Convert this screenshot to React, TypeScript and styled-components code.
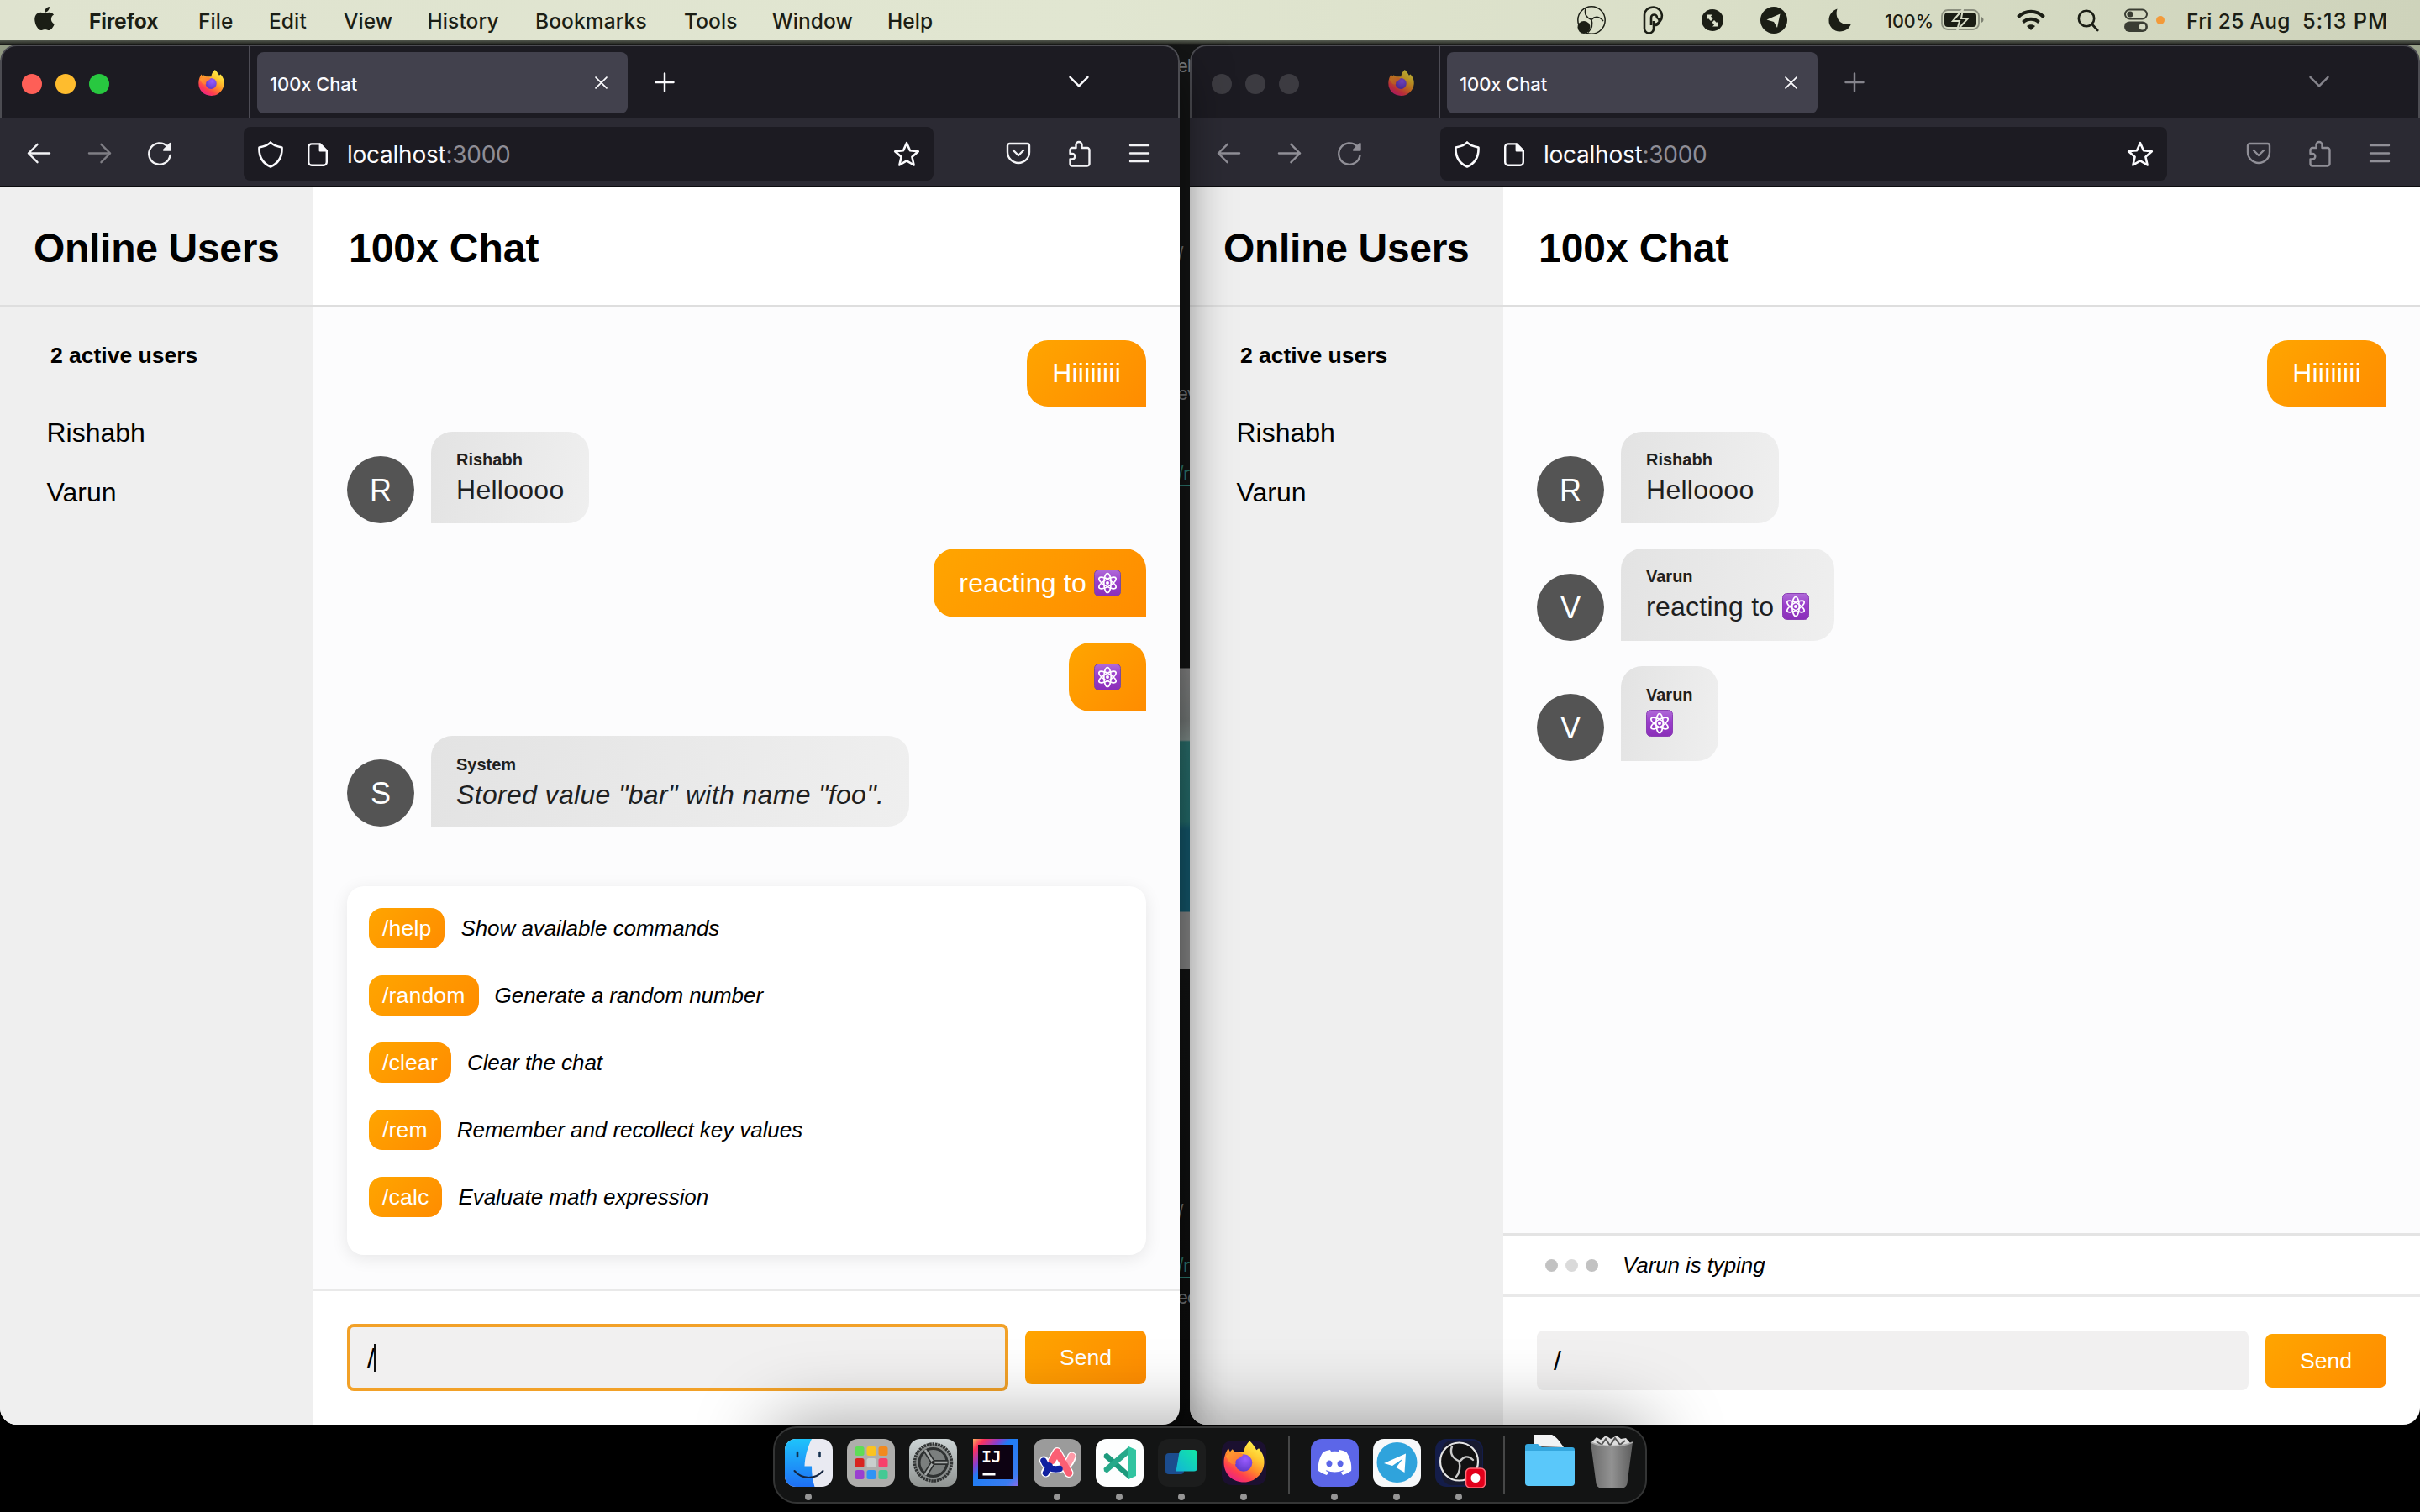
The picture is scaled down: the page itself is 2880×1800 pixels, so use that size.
import React from "react";
import styled, { createGlobalStyle, css } from "styled-components";
import { FaApple, FaDiscord, FaTelegramPlane } from "react-icons/fa";

const Global = createGlobalStyle`
  * { box-sizing: border-box; }
  html, body { margin: 0; padding: 0; background: #000; }
  body { width: 2880px; height: 1800px; overflow: hidden; }
`;

const UI_FONT = `Inter, "Liberation Sans", sans-serif`;
const PAGE_FONT = `"Liberation Sans", Arial, sans-serif`;
const ORANGE = "linear-gradient(135deg, #ffa500 0%, #ff8c00 100%)";

/* ---------- desktop ---------- */

const Desktop = styled.div`
  position: relative;
  width: 2880px;
  height: 1800px;
  display: flex;
  flex-direction: column;
  background: #000;
  overflow: hidden;
`;

const MenuBar = styled.header`
  position: relative;
  z-index: 3;
  flex: 0 0 48px;
  display: flex;
  justify-content: space-between;
  align-items: center;
  padding: 1px 36px 0 40px;
  background: linear-gradient(90deg, #dfe3cf 0%, #e1e6d1 45%, #dadfc8 70%, #ced3bb 100%);
  color: #1b1e15;
  font-family: ${UI_FONT};
`;

const MenuGroup = styled.div`
  display: flex;
  align-items: center;
  height: 46px;
`;

const AppleSlot = styled.div`
  width: 66px;
  height: 32px;
  margin-top: -5px;
`;

const MenuItem = styled.span<{ $w: number; $bold?: boolean }>`
  width: ${(p) => p.$w}px;
  font-size: 24.5px;
  line-height: 46px;
  white-space: nowrap;
  font-weight: ${(p) => (p.$bold ? 700 : 450)};
  letter-spacing: ${(p) => (p.$bold ? "-0.1px" : "0.1px")};
`;

const StatusIcon = styled.div<{ $w: number }>`
  width: ${(p) => p.$w}px;
  height: 46px;
  display: flex;
  align-items: center;
  padding-bottom: 1px;
  svg { display: block; overflow: visible; }
`;

const StatusText = styled.span<{ $w: number; $size: number; $ls?: number }>`
  width: ${(p) => p.$w}px;
  font-size: ${(p) => p.$size}px;
  line-height: 46px;
  font-weight: 450;
  letter-spacing: ${(p) => p.$ls || 0}px;
  white-space: nowrap;
`;

const Stage = styled.main`
  position: relative;
  flex: 0 0 1648px;
  display: flex;
  gap: 12px;
  padding-top: 5px;
  background:
    linear-gradient(#575d52, #33362f 70%, #101010) 0 0 / 100% 5px no-repeat,
    linear-gradient(180deg,
      #141515 0, #141515 747px,
      #8a8a8a 748px, #7b807f 810px, #869390 833px,
      #2c7370 835px, #25706f 930px, #155b70 940px, #155b70 1037px,
      #8c8c8c 1038px, #8c8c8c 1105px,
      #131414 1106px, #0d0d0d 100%) 1380px 0 / 60px 100% no-repeat,
    linear-gradient(#9aa38b, #9aa38b) 0 0 / 100% 40px no-repeat,
    #000;
`;

const Glimpse = styled.span<{ $top: number; $color: string; $line?: boolean }>`
  position: absolute;
  left: 1404px;
  top: ${(p) => p.$top}px;
  width: 12px;
  height: 30px;
  overflow: hidden;
  font: 22px/28px ${UI_FONT};
  letter-spacing: -1px;
  text-indent: -3px;
  color: ${(p) => p.$color};
  border-bottom: ${(p) => (p.$line ? `2px solid ${p.$color}` : "0")};
`;

/* ---------- browser window ---------- */

const Window = styled.section<{ $w: number; $front?: boolean }>`
  position: relative;
  flex: 0 0 ${(p) => p.$w}px;
  display: flex;
  flex-direction: column;
  border-radius: 20px;
  overflow: hidden;
  z-index: ${(p) => (p.$front ? 2 : 1)};
  ${(p) => p.$front && css`box-shadow: 0 30px 60px rgba(0, 0, 0, 0.6);`}
`;

const TabStrip = styled.div`
  flex: 0 0 88px;
  display: flex;
  align-items: center;
  background: #1c1b22;
  border: 2px solid #4c4c52;
  border-bottom: 0;
  border-radius: 20px 20px 0 0;
`;

const Lights = styled.div`
  width: 296px;
  height: 86px;
  display: flex;
  align-items: center;
  gap: 16px;
  padding: 4px 0 0 24px;
  border-right: 2px solid #4d4c55;
`;

const Light = styled.i<{ $c: string }>`
  width: 24px;
  height: 24px;
  border-radius: 50%;
  background: ${(p) => p.$c};
`;

const FoxSlot = styled.div<{ $dim?: boolean }>`
  margin: -2px 0 0 90px;
  height: 32px;
  filter: ${(p) => (p.$dim ? "brightness(0.72)" : "none")};
`;

const Tab = styled.div`
  width: 441px;
  height: 73px;
  margin-left: 8px;
  margin-top: 1px;
  padding: 0 20px 0 15px;
  display: flex;
  align-items: center;
  justify-content: space-between;
  border-radius: 8px;
  background: #42414d;
  color: #fbfbfe;
  font: 500 22px/73px ${UI_FONT};
  letter-spacing: -0.1px;
`;

const TabTitle = styled.span`
  padding-top: 4px;
`;

const StripButton = styled.div<{ $ml: number | "auto"; $mr?: number; $dim?: boolean }>`
  display: flex;
  margin-left: ${(p) => (p.$ml === "auto" ? "auto" : `${p.$ml}px`)};
  margin-right: ${(p) => p.$mr || 0}px;
  color: ${(p) => (p.$dim ? "#85848c" : "#fbfbfe")};
`;

const NavBar = styled.div`
  flex: 0 0 82px;
  display: flex;
  align-items: center;
  padding: 4px 32px 0 31px;
  background: #2b2a33;
  border-bottom: 2px solid #0c0c0f;
`;

const NavButtons = styled.div<{ $gap: number; $dim?: boolean }>`
  display: flex;
  gap: ${(p) => p.$gap}px;
  color: ${(p) => (p.$dim ? "#908f97" : "#f3f3f6")};
`;

const NavIcon = styled.span<{ $off?: boolean }>`
  display: flex;
  opacity: ${(p) => (p.$off ? 0.42 : 1)};
`;

const UrlBar = styled.div<{ $ml: number; $w: number }>`
  width: ${(p) => p.$w}px;
  margin-left: ${(p) => p.$ml}px;
  height: 64px;
  display: flex;
  align-items: center;
  padding: 2px 16px 0;
  border-radius: 8px;
  background: #1c1b22;
  color: #fbfbfe;
  font: 400 28px/62px ${UI_FONT};
`;

const PageSlot = styled.span`
  display: flex;
  margin-left: 25px;
`;

const UrlText = styled.span`
  margin-left: 20px;
  letter-spacing: -0.25px;
  flex: 1;
`;

const Port = styled.span`
  color: #8e8d96;
`;

/* ---------- chat page ---------- */

const Page = styled.div`
  flex: 1;
  min-height: 0;
  display: flex;
  font-family: ${PAGE_FONT};
  color: #000;
  background: #fff;
`;

const Sidebar = styled.aside`
  flex: 0 0 373px;
  background: #efefef;
`;

const Heading = styled.h1<{ $side?: boolean }>`
  margin: 0;
  height: 142px;
  padding: 5px 0 0 ${(p) => (p.$side ? 40 : 42)}px;
  border-bottom: 2px solid #dedede;
  font-size: 48px;
  line-height: 135px;
  font-weight: 700;
  letter-spacing: ${(p) => (p.$side ? -0.3 : -0.05)}px;
  white-space: nowrap;
`;

const ActiveCount = styled.div`
  padding: 40px 0 0 60px;
  font-size: 26.6px;
  font-weight: 700;
  line-height: 36px;
  letter-spacing: -0.05px;
`;

const UserName = styled.div`
  padding-left: 55.5px;
  height: 70.5px;
  font-size: 32px;
  line-height: 70.5px;
`;

const UserList = styled.div`
  padding-top: 39px;
`;

const Main = styled.div`
  flex: 1;
  min-width: 0;
  display: flex;
  flex-direction: column;
`;

const Feed = styled.div`
  flex: 1;
  min-height: 0;
  display: flex;
  flex-direction: column;
  gap: 29.7px;
  padding: 39.5px 40px 0;
  background: #fcfcfd;
`;

const Row = styled.div<{ $own?: boolean }>`
  display: flex;
  align-items: flex-end;
  justify-content: ${(p) => (p.$own ? "flex-end" : "flex-start")};
  gap: 20px;
`;

const Avatar = styled.div`
  width: 80px;
  height: 80px;
  border-radius: 50%;
  background: #545454;
  color: #fff;
  text-align: center;
  font-size: 36px;
  line-height: 82px;
`;

const OwnBubble = styled.div<{ $h: number }>`
  height: ${(p) => p.$h}px;
  display: flex;
  align-items: center;
  padding: 0 30px;
  border-radius: 25px 25px 0 25px;
  background: ${ORANGE};
  color: #fff;
  font-size: 32px;
  line-height: 36px;
  letter-spacing: 0.2px;
  white-space: pre;
`;

const Bubble = styled.div<{ $h: number }>`
  height: ${(p) => p.$h}px;
  padding: 21.5px 30px 0;
  border-radius: 25px 25px 25px 0;
  background: linear-gradient(100deg, #e3e3e3 0%, #efefef 100%);
  color: #1f1f1f;
`;

const Author = styled.div`
  font-size: 20px;
  line-height: 24px;
  font-weight: 700;
`;

const Body = styled.div<{ $italic?: boolean }>`
  display: flex;
  align-items: center;
  margin-top: 6px;
  font-size: 32px;
  line-height: 36px;
  font-style: ${(p) => (p.$italic ? "italic" : "normal")};
  letter-spacing: ${(p) => (p.$italic ? 0.34 : 0.27)}px;
  white-space: pre;
`;

const CommandPanel = styled.div`
  height: 439px;
  margin: auto 0 40px;
  padding: 26px;
  display: flex;
  flex-direction: column;
  gap: 32px;
  border-radius: 20px;
  background: #fff;
  box-shadow: 0 4px 20px rgba(0, 0, 0, 0.09);
`;

const Command = styled.div`
  height: 48px;
  display: flex;
  align-items: center;
  gap: 19px;
`;

const Chip = styled.span`
  height: 48px;
  padding: 0 16px;
  border-radius: 16px;
  background: ${ORANGE};
  color: #fff;
  font-size: 26.6px;
  line-height: 49px;
  letter-spacing: 0.15px;
`;

const CommandText = styled.em`
  font-size: 26px;
  line-height: 50px;
  letter-spacing: -0.06px;
`;

const TypingBar = styled.div`
  flex: 0 0 73px;
  display: flex;
  align-items: center;
  gap: 9px;
  padding: 1px 0 0 50px;
  border-top: 3px solid #e4e4e4;
`;

const Dot = styled.i<{ $c: string }>`
  width: 15px;
  height: 15px;
  border-radius: 50%;
  background: ${(p) => p.$c};
`;

const TypingText = styled.em`
  margin-left: 20px;
  font-size: 26px;
  letter-spacing: -0.1px;
`;

const Footer = styled.div<{ $h: number }>`
  flex: 0 0 ${(p) => p.$h}px;
  display: flex;
  align-items: center;
  gap: 20px;
  padding: 0 40px 1px;
  border-top: 3px solid #e9e9e9;
`;

const Field = styled.div<{ $focus?: boolean }>`
  flex: 1;
  height: ${(p) => (p.$focus ? 80 : 71)}px;
  display: flex;
  align-items: center;
  padding: 2px 0 0 20px;
  border: ${(p) => (p.$focus ? "4px solid #f2a128" : "0")};
  border-radius: 8px;
  background: #f1f0f0;
  font-size: 32px;
`;

const Caret = styled.i`
  width: 2px;
  height: 33px;
  margin: -2px 0 0 -1px;
  background: #111;
`;

const Send = styled.div`
  width: 144px;
  height: 64px;
  border-radius: 8px;
  background: ${ORANGE};
  color: #fff;
  text-align: center;
  font-size: 26.6px;
  line-height: 65px;
`;

/* ---------- dock ---------- */

const DockArea = styled.footer`
  position: relative;
  z-index: 4;
  flex: 1;
  display: flex;
  justify-content: center;
  padding-top: 2px;
`;

const Dock = styled.div`
  width: 1040px;
  height: 92px;
  display: flex;
  align-items: flex-start;
  padding: 13px 0 0 3px;
  border: 2px solid #343535;
  border-radius: 28px;
  background: #131414;
  box-shadow: 0 0 90px 4px rgba(0, 0, 0, 0.38);
`;

const DockItem = styled.div<{ $tall?: boolean }>`
  width: 74px;
  height: 74px;
  margin-top: ${(p) => (p.$tall ? -5 : 0)}px;
  display: flex;
  flex-direction: column;
  align-items: center;
  svg { display: block; overflow: visible; }
`;

const Running = styled.i`
  width: 8px;
  height: 8px;
  margin-top: 8px;
  border-radius: 50%;
  background: #969696;
`;

const Divider = styled.i`
  width: 2px;
  height: 68px;
  margin: -3px 16px 0;
  background: #464747;
`;

/* ---------- icons ---------- */

type G = { d: string; size?: number; w?: number; fillD?: string };
const Glyph = ({ d, size = 32, w = 2.4, fillD }: G) => (
  <svg width={size} height={size} viewBox="0 0 32 32" fill="none" stroke="currentColor" strokeWidth={w} strokeLinecap="round" strokeLinejoin="round">
    <path d={d} />
    {fillD && <path d={fillD} fill="currentColor" />}
  </svg>
);

const P = {
  back: "M29 16H3M14 5L3 16l11 11",
  forward: "M3 16h26M18 5l11 11-11 11",
  reload: "M28.5 18A12.7 12.7 0 1 1 25 7.2L28 10",
  reloadTip: "M28.500 4v7.500h-7.500z",
  shield: "M16 1.5C19 5 24 6.500 29.500 7.500C30 17 26 26 16 30.500C6 26 2 17 2.500 7.500C8 6.500 13 5 16 1.500Z",
  page: "M19 2.500H8.500a4 4 0 0 0-4 4v19a4 4 0 0 0 4 4h15a4 4 0 0 0 4-4V11z",
  pageTip: "M19 3v8h8z",
  star: "M16 2.200l4 9 9.800 1-7.400 6.500 2.200 9.800-8.600-5.100-8.600 5.100 2.200-9.800L2.200 12.200l9.800-1z",
  pocket: "M5.500 4h21A2.500 2.500 0 0 1 29 6.500V14a13 13 0 0 1-26 0V6.500A2.500 2.500 0 0 1 5.500 4zM10 12l6 6 6-6",
  puzzle: "M12.500 9V5.500a3.500 3.500 0 0 1 7 0V9H26a2.500 2.500 0 0 1 2.500 2.500V28a2.500 2.500 0 0 1-2.500 2.500H8A2.500 2.500 0 0 1 5.500 28v-5.500H8a3.300 3.300 0 0 0 0-6.600H5.500V11.500A2.500 2.500 0 0 1 8 9z",
  menu: "M5 6h22M5 15.500h22M5 25h22",
  plus: "M16 4v24M4 16h24",
  close: "M7 7l18 18M25 7L7 25",
  chevron: "M4 9l12 12L28 9",
};

const Atom = ({ dark }: { dark?: boolean }) => (
  <svg width="32" height="32" viewBox="0 0 32 32" role="img" aria-label="atom">
    <defs>
      <linearGradient id="atomg" x1="0" y1="0" x2="0" y2="1">
        <stop offset="0" stopColor="#b06bd8" />
        <stop offset="0.45" stopColor="#9a3ecb" />
        <stop offset="1" stopColor="#8a2fb8" />
      </linearGradient>
    </defs>
    <rect x="0.500" y="0.500" width="31" height="31" rx="5" fill="url(#atomg)" stroke={dark ? "#8b3fb5" : "#7c4a9c"} />
    <g fill="none" stroke="#fff" strokeWidth="1.700">
      <ellipse cx="16" cy="16" rx="4.200" ry="11.500" />
      <ellipse cx="16" cy="16" rx="4.200" ry="11.500" transform="rotate(60 16 16)" />
      <ellipse cx="16" cy="16" rx="4.200" ry="11.500" transform="rotate(120 16 16)" />
    </g>
    <circle cx="16" cy="16" r="2" fill="#fff" />
  </svg>
);

const Fox = ({ size }: { size: number }) => (
  <svg width={size} height={size} viewBox="0 0 50 50">
    <defs>
      <linearGradient id="foxg" x1="0.850" y1="0.050" x2="0.250" y2="1">
        <stop offset="0" stopColor="#fff44f" />
        <stop offset="0.300" stopColor="#ffc830" />
        <stop offset="0.550" stopColor="#ff8a2a" />
        <stop offset="0.780" stopColor="#ff3f4e" />
        <stop offset="1" stopColor="#e8208c" />
      </linearGradient>
      <radialGradient id="foxp" cx="0.600" cy="0.300" r="0.800">
        <stop offset="0" stopColor="#9a5cff" />
        <stop offset="1" stopColor="#5a35c4" />
      </radialGradient>
      <linearGradient id="foxo" x1="0" y1="0" x2="1" y2="1">
        <stop offset="0" stopColor="#ffa02e" />
        <stop offset="1" stopColor="#ff6a36" />
      </linearGradient>
    </defs>
    <path fill="url(#foxg)" d="M32 0c4 4 6 7 8 11l3-2c5 6 7 12 6.500 18C48.500 40 38 50 25 50 11 50 .5 40 .5 26 .5 19 3 13 6 9l2 4 3-3c1 2 3 3.500 6 3.500h8c0-5 3-10 7-13.500z" />
    <circle cx="24.500" cy="26.500" r="10.500" fill="url(#foxp)" />
    <path fill="url(#foxo)" d="M3 18c5-4 10-5 15-4 3 .5 5 1.500 6 3l-5 4c-3 1-5 3-4 7-5 1-8-1-12-10z" />
  </svg>
);

const Tile = ({ children, fill }: { children?: React.ReactNode; fill: string }) => (
  <svg width="57" height="57" viewBox="0 0 57 57">
    <rect width="57" height="57" rx="13" fill={fill} />
    {children}
  </svg>
);

const Finder = () => (
  <svg width="57" height="57" viewBox="0 0 57 57">
    <defs>
      <linearGradient id="fb" x1="0" y1="0" x2="0" y2="1"><stop offset="0" stopColor="#1ec4fb" /><stop offset="1" stopColor="#1e6ff5" /></linearGradient>
      <clipPath id="fc"><rect width="57" height="57" rx="13" /></clipPath>
    </defs>
    <g clipPath="url(#fc)">
      <rect width="57" height="57" fill="#e9eaf2" />
      <path d="M0 0h32c-5 10-8 21-8.500 32.500H32c0 9 1 17 3.500 24.500H0z" fill="url(#fb)" />
      <path d="M15 16v5M41.500 16v5" stroke="#14304f" strokeWidth="2.600" strokeLinecap="round" />
      <path d="M11.500 38c9 10.500 25 10.500 34 0" stroke="#14243f" strokeWidth="2" fill="none" strokeLinecap="round" />
    </g>
  </svg>
);

const PADS = ["#5fdc57", "#fbc321", "#f28a1f", "#d8241f", "#c9cfcd", "#f7406b", "#9a3fd0", "#2f93f5", "#45c994"];
const Launchpad = () => (
  <Tile fill="#aeaeac">
    {PADS.map((c, i) => (
      <rect key={c} x={9.500 + (i % 3) * 14} y={9 + Math.floor(i / 3) * 14} width="11" height="11" rx="2.500" fill={c} />
    ))}
  </Tile>
);

const Settings = () => (
  <svg width="57" height="57" viewBox="0 0 57 57">
    <defs><linearGradient id="sg" x1="0" y1="0" x2="0" y2="1"><stop offset="0" stopColor="#ccd4d5" /><stop offset="1" stopColor="#909492" /></linearGradient></defs>
    <rect width="57" height="57" rx="13" fill="url(#sg)" />
    <circle cx="28.500" cy="28" r="22" fill="#8b8f8e" stroke="#303333" strokeWidth="3.500" strokeDasharray="2.600 0.800" />
    <circle cx="28.500" cy="28" r="16.500" fill="#7b7f7e" stroke="#2f3232" strokeWidth="3" />
    <g stroke="#2b2e2e" strokeWidth="6"><path d="M28.500 28L19 13M28.500 28h18M28.500 28L19 43" /></g>
    <g stroke="#a5a9a8" strokeWidth="2.600"><path d="M28.500 28L19 13M28.500 28h17M28.500 28L19 43" /></g>
    <circle cx="28.500" cy="28" r="2" fill="#222" />
  </svg>
);

const Idea = () => (
  <svg width="57" height="57" viewBox="0 0 57 57">
    <defs>
      <linearGradient id="ij" x1="0" y1="0" x2="1" y2="1">
        <stop offset="0" stopColor="#fdb060" /><stop offset="0.130" stopColor="#fe315d" /><stop offset="0.300" stopColor="#8a3ecf" />
        <stop offset="0.420" stopColor="#1f7df5" /><stop offset="0.850" stopColor="#3a7cf0" /><stop offset="1" stopColor="#8a6be8" />
      </linearGradient>
    </defs>
    <rect x="2" y="0" width="54" height="56" fill="url(#ij)" />
    <rect x="8" y="7" width="41" height="41" fill="#0d0212" />
    <text x="12" y="28" fill="#fff" fontFamily="DejaVu Sans Mono, Liberation Mono, monospace" fontWeight="700" fontSize="20" letterSpacing="-0.500">IJ</text>
    <rect x="13.500" y="40.500" width="15" height="3" fill="#fff" />
  </svg>
);

const Arc = () => (
  <Tile fill="#9b9b9b">
    <g fill="none" strokeLinecap="round" strokeLinejoin="round">
      <path d="M14.500 40L28 15.500l14 25M12.500 26c5 13 28 13 33-5" stroke="#fff" strokeWidth="11" />
      <path d="M45.500 20.500c-2 6-5 10-9 12.500" stroke="#ff9aa8" strokeWidth="8" />
      <path d="M22 26L28 15.500 42 40.500" stroke="#fb5f74" strokeWidth="8.500" />
      <path d="M12 26c3 8 10 11 19 9.500M19 32l-4.500 8.500" stroke="#1020a0" strokeWidth="7.500" />
    </g>
    <circle cx="28" cy="29" r="2.600" fill="#fff" />
  </Tile>
);

const Code = () => (
  <Tile fill="#fdfefe">
    <path d="M10 18.500l3.500-2 26 23.500v8L9.500 22z" fill="#1d9a7d" />
    <path d="M10 38.500l3.500 2L39.500 18V9L9.500 35z" fill="#27a98a" />
    <path d="M38 8.500l10 4.500v31l-10 4.500z" fill="#31c4a0" />
  </Tile>
);

const Warp = () => (
  <Tile fill="#1c1d1d">
    <defs><linearGradient id="wg" x1="0" y1="1" x2="1" y2="0"><stop offset="0" stopColor="#12b5d8" /><stop offset="1" stopColor="#12e8a4" /></linearGradient></defs>
    <rect x="9" y="17" width="22" height="25" rx="4" fill="#1b4c8e" />
    <path d="M29 13h14a3.500 3.500 0 0 1 3.500 3.500V35a3.500 3.500 0 0 1-3.500 3.500H21.500L25.500 16a3.500 3.500 0 0 1 3.500-3z" fill="url(#wg)" />
  </Tile>
);

const FoxTile = () => (
  <svg width="57" height="57" viewBox="0 0 57 57">
    <rect x="2" y="2" width="53" height="53" rx="12" fill="#1b1030" />
    <g transform="translate(4 2.500)"><Fox size={49} /></g>
  </svg>
);

const Discord = () => (
  <Tile fill="#5c66e8">
    <FaDiscord x="7" y="6.500" size={43} color="#fff" />
  </Tile>
);

const Telegram = () => (
  <Tile fill="#f6f8fa">
    <circle cx="28.500" cy="28" r="24" fill="#2fa3dc" />
    <path d="M13 29L39 17.500 37.500 40 27.500 34l8-10.500L23 32z" fill="#fff" />
  </Tile>
);

const Obs = () => (
  <Tile fill="#141d4a">
    <rect x="8" y="2" width="48" height="53" rx="12" fill="#171a30" />
    <circle cx="28.500" cy="27" r="22.500" fill="#111112" stroke="#e4e4e4" strokeWidth="2.200" />
    <g fill="none" stroke="#c9c9c9" strokeWidth="2.400" strokeLinecap="round">
      <path d="M20 9c-3 8 1 14 8.500 17.500M45 25c-6-6-11-4-15.500 1.500M25 45c5-6 5-12 3.500-18.500" />
    </g>
    <rect x="36.500" y="35" width="23" height="23" rx="5" fill="#e3001b" stroke="#ff6b78" strokeWidth="1.500" />
    <circle cx="48" cy="46.500" r="5.500" fill="#fff" />
  </Tile>
);

const Folder = () => (
  <svg width="61" height="62" viewBox="0 0 61 62">
    <path d="M11 14V0h22c6 3 9 8 14 15z" fill="#f2f3f4" />
    <path d="M1 14a3 3 0 0 1 3-3h12l5 4h36a3 3 0 0 1 3 3v10H1z" fill="#35a7de" />
    <path d="M1 19h59v38a4 4 0 0 1-4 4H5a4 4 0 0 1-4-4z" fill="#5ac8fa" />
  </svg>
);

const Trash = () => (
  <svg width="52" height="65" viewBox="0 0 52 65">
    <defs><linearGradient id="tg" x1="0" x2="1"><stop offset="0" stopColor="#6b6b6b" /><stop offset="0.500" stopColor="#929292" /><stop offset="1" stopColor="#5e5e5e" /></linearGradient></defs>
    <path d="M2 9l6-6 5 3 6-5 6 4 7-4 5 4 6-1 6 7-4 6H6z" fill="#dedede" />
    <path d="M8 8l6 4 5-7 5 8 6-9 6 8 6-5" stroke="#555" strokeWidth="2" fill="none" />
    <path d="M1 9c12 6 38 6 50 0l-6.500 49c-1 4-4 6-8 6h-21c-4 0-7-2-8-6z" fill="url(#tg)" />
    <path d="M1 9c12 6 38 6 50 0" stroke="#a9a9a9" strokeWidth="1.500" fill="none" />
  </svg>
);

/* ---------- data ---------- */

const MENUS: [string, number][] = [
  ["Firefox", 130], ["File", 84], ["Edit", 89], ["View", 99.5], ["History", 128.5],
  ["Bookmarks", 177], ["Tools", 105], ["Window", 137], ["Help", 60],
];

const COMMANDS = [
  ["/help", "Show available commands"],
  ["/random", "Generate a random number"],
  ["/clear", "Clear the chat"],
  ["/rem", "Remember and recollect key values"],
  ["/calc", "Evaluate math expression"],
];

type Msg = { from?: string; text?: string; atom?: boolean; italic?: boolean; h: number };

const LEFT: Msg[] = [
  { text: "Hiiiiiiii", h: 79.5 },
  { from: "Rishabh", text: "Helloooo", h: 109.5 },
  { text: "reacting to ", atom: true, h: 82 },
  { atom: true, h: 82 },
  { from: "System", text: 'Stored value "bar" with name "foo".', italic: true, h: 108 },
];

const RIGHT: Msg[] = [
  { text: "Hiiiiiiii", h: 79.5 },
  { from: "Rishabh", text: "Helloooo", h: 109.5 },
  { from: "Varun", text: "reacting to ", atom: true, h: 110.5 },
  { from: "Varun", atom: true, h: 113 },
];

const Message = ({ m }: { m: Msg }) =>
  m.from ? (
    <Row>
      <Avatar>{m.from[0]}</Avatar>
      <Bubble $h={m.h}>
        <Author>{m.from}</Author>
        <Body $italic={m.italic}>{m.text}{m.atom && <Atom dark />}</Body>
      </Bubble>
    </Row>
  ) : (
    <Row $own>
      <OwnBubble $h={m.h}>{m.text}{m.atom && <Atom />}</OwnBubble>
    </Row>
  );

const Browser = ({ width, front, urlMl, urlW, children }: { width: number; front?: boolean; urlMl: number; urlW: number; children: React.ReactNode }) => {
  const lights = front ? ["#fe5f57", "#febc2e", "#28c840"] : ["#3c3b41", "#3c3b41", "#3c3b41"];
  return (
    <Window $w={width} $front={front}>
      <TabStrip>
        <Lights>
          {lights.map((c, i) => <Light key={i} $c={c} />)}
          <FoxSlot $dim={!front}><Fox size={31} /></FoxSlot>
        </Lights>
        <Tab><TabTitle>100x Chat</TabTitle><Glyph d={P.close} size={23} w={2.4} /></Tab>
        <StripButton $ml={30} $dim={!front}><Glyph d={P.plus} size={28} w={2.8} /></StripButton>
        <StripButton $ml="auto" $mr={104} $dim={!front}><Glyph d={P.chevron} size={28} w={2.8} /></StripButton>
      </TabStrip>
      <NavBar>
        <NavButtons $gap={40.5} $dim={!front}>
          <NavIcon><Glyph d={P.back} size={31} /></NavIcon>
          <NavIcon $off={front}><Glyph d={P.forward} size={31} /></NavIcon>
          <NavIcon><Glyph d={P.reload} fillD={P.reloadTip} /></NavIcon>
        </NavButtons>
        <UrlBar $ml={urlMl} $w={urlW}>
          <Glyph d={P.shield} w={2.6} />
          <PageSlot><Glyph d={P.page} size={30} w={2.6} fillD={P.pageTip} /></PageSlot>
          <UrlText>localhost<Port>:3000</Port></UrlText>
          <Glyph d={P.star} w={2.6} />
        </UrlBar>
        <StripButton $ml="auto" $dim={!front}>
          <NavButtons $gap={40} $dim={!front}>
            <Glyph d={P.pocket} />
            <Glyph d={P.puzzle} />
            <Glyph d={P.menu} />
          </NavButtons>
        </StripButton>
      </NavBar>
      {children}
    </Window>
  );
};

const Users = () => (
  <Sidebar>
    <Heading $side>Online Users</Heading>
    <ActiveCount>2 active users</ActiveCount>
    <UserList>
      <UserName>Rishabh</UserName>
      <UserName>Varun</UserName>
    </UserList>
  </Sidebar>
);

const Status = () => (
  <MenuGroup>
    <StatusIcon $w={78}>
      <svg width="34" height="34" viewBox="0 0 34 34" fill="none" stroke="#1b1e15" strokeWidth="1.500">
        <circle cx="17" cy="17" r="16.200" />
        <path d="M10 3c-2 7 1 11 7 13.500M31 18c-5-6-10-6-14-1.500M17 16.500c2 6 0 11-4 15" />
        <circle cx="8" cy="25.500" r="7.500" fill="#1b1e15" stroke="none" />
      </svg>
    </StatusIcon>
    <StatusIcon $w={70}>
      <svg width="26" height="34" viewBox="0 0 26 34" fill="none" stroke="#1b1e15" strokeWidth="2.600">
        <path d="M10 23V14a3.500 3.500 0 0 1 7 0a4 4 0 0 1-4 8.500M14 22a10.300 10.300 0 0 0-1-20.500C6 1.500 2 6 2 11v16a5.500 5.500 0 0 0 11 0V18" />
      </svg>
    </StatusIcon>
    <StatusIcon $w={70}>
      <svg width="26" height="26" viewBox="0 0 26 26">
        <circle cx="13" cy="13" r="13" fill="#1b1e15" />
        <path d="M6 6.500h7l-2 2 2.500 3-2.500 2.500L8 11 6 13zM20 20.500h-7l2-2-2.500-3L15 13l3 3 2-2z" fill="#dde2cd" />
      </svg>
    </StatusIcon>
    <StatusIcon $w={81}>
      <svg width="32" height="32" viewBox="0 0 32 32">
        <circle cx="16" cy="16" r="16" fill="#1b1e15" />
        <path d="M7.500 15.500L23.500 8.500 20 25l-4-7z" fill="#dde2cd" />
      </svg>
    </StatusIcon>
    <StatusIcon $w={67}>
      <svg width="28" height="28" viewBox="0 0 28 28"><path d="M10.500 .5C4 3 .5 8 .5 14a13 13 0 0 0 13 13.500c6.500 0 11.500-3.500 13.500-9.500C17 22 6.500 13 10.500.5z" fill="#1b1e15" /></svg>
    </StatusIcon>
    <StatusText $w={67} $size={21.5} $ls={0}>100%</StatusText>
    <StatusIcon $w={90}>
      <svg width="52" height="26" viewBox="0 0 52 26">
        <rect x="1" y="1" width="44" height="23" rx="7" fill="none" stroke="#8b8f7f" strokeWidth="1.800" />
        <rect x="4" y="4" width="38" height="17" rx="4" fill="#1b1e15" />
        <path d="M47.500 9v7c4-1 4-6 0-7z" fill="#7d8172" />
        <path d="M26 0L14 14h8l-3 11 13-14h-8z" fill="#1b1e15" stroke="#d6dbc5" strokeWidth="2" />
      </svg>
    </StatusIcon>
    <StatusIcon $w={72}>
      <svg width="34" height="26" viewBox="0 0 34 26" fill="none" stroke="#1b1e15" strokeWidth="4">
        <path d="M1.500 9.500c9-9 22-9 31 0M7.500 15.500c5.500-5 13.500-5 19 0" />
        <path d="M17 25l-5-5c3-2.500 7-2.500 10 0z" fill="#1b1e15" stroke="none" />
      </svg>
    </StatusIcon>
    <StatusIcon $w={56}>
      <svg width="26" height="27" viewBox="0 0 26 27" fill="none" stroke="#1b1e15" strokeWidth="2.600" strokeLinecap="round">
        <circle cx="11" cy="11" r="9.200" /><path d="M17.800 18l6.500 7" />
      </svg>
    </StatusIcon>
    <StatusIcon $w={38}>
      <svg width="28" height="28" viewBox="0 0 28 28">
        <rect x="1" y="1.500" width="26" height="11" rx="5.500" fill="none" stroke="#3a3d33" strokeWidth="2" />
        <circle cx="7" cy="7" r="3.600" fill="#3a3d33" />
        <rect x="0" y="15.500" width="28" height="12.500" rx="6.200" fill="#3a3d33" />
        <circle cx="21.500" cy="21.700" r="3.800" fill="#d3d8c1" />
      </svg>
    </StatusIcon>
    <StatusIcon $w={36}>
      <svg width="10" height="10" viewBox="0 0 10 10"><circle cx="5" cy="5" r="5" fill="#f39a3a" /></svg>
    </StatusIcon>
    <StatusText $w={138} $size={24.5} $ls={0.35}>Fri 25 Aug</StatusText>
    <StatusText $w={104} $size={25.5} $ls={0.8}>5:13 PM</StatusText>
  </MenuGroup>
);

const App = () => (
  <Desktop>
    <Global />
    <MenuBar>
      <MenuGroup>
        <AppleSlot><FaApple size={32} style={{ marginLeft: -3 }} /></AppleSlot>
        {MENUS.map(([t, w], i) => <MenuItem key={t} $w={w} $bold={i === 0}>{t}</MenuItem>)}
      </MenuGroup>
      <Status />
    </MenuBar>

    <Stage>
      <Glimpse $top={16} $color="#77797a">el</Glimpse>
      <Glimpse $top={240} $color="#77797a">/</Glimpse>
      <Glimpse $top={406} $color="#77797a">ev</Glimpse>
      <Glimpse $top={501} $color="#2f7d74" $line>/r</Glimpse>
      <Glimpse $top={1380} $color="#77797a">/</Glimpse>
      <Glimpse $top={1444} $color="#2f7d74" $line>/r</Glimpse>
      <Glimpse $top={1482} $color="#77797a">ec</Glimpse>

      <Browser width={1404} front urlMl={84} urlW={821}>
        <Page>
          <Users />
          <Main>
            <Heading>100x Chat</Heading>
            <Feed>
              {LEFT.map((m, i) => <Message key={i} m={m} />)}
              <CommandPanel>
                {COMMANDS.map(([c, d]) => (
                  <Command key={c}><Chip>{c}</Chip><CommandText>{d}</CommandText></Command>
                ))}
              </CommandPanel>
            </Feed>
            <Footer $h={162}>
              <Field $focus>/<Caret /></Field>
              <Send>Send</Send>
            </Footer>
          </Main>
        </Page>
      </Browser>

      <Browser width={1464} urlMl={92} urlW={865}>
        <Page>
          <Users />
          <Main>
            <Heading>100x Chat</Heading>
            <Feed>{RIGHT.map((m, i) => <Message key={i} m={m} />)}</Feed>
            <TypingBar>
              <Dot $c="#c2c2c2" /><Dot $c="#dadada" /><Dot $c="#c2c2c2" />
              <TypingText>Varun is typing</TypingText>
            </TypingBar>
            <Footer $h={155}>
              <Field>/</Field>
              <Send>Send</Send>
            </Footer>
          </Main>
        </Page>
      </Browser>
    </Stage>

    <DockArea>
      <Dock>
        <DockItem><Finder /><Running /></DockItem>
        <DockItem><Launchpad /></DockItem>
        <DockItem><Settings /></DockItem>
        <DockItem><Idea /></DockItem>
        <DockItem><Arc /><Running /></DockItem>
        <DockItem><Code /><Running /></DockItem>
        <DockItem><Warp /><Running /></DockItem>
        <DockItem><FoxTile /><Running /></DockItem>
        <Divider />
        <DockItem><Discord /><Running /></DockItem>
        <DockItem><Telegram /><Running /></DockItem>
        <DockItem><Obs /><Running /></DockItem>
        <Divider />
        <DockItem $tall><Folder /></DockItem>
        <DockItem $tall><Trash /></DockItem>
      </Dock>
    </DockArea>
  </Desktop>
);

export default App;
